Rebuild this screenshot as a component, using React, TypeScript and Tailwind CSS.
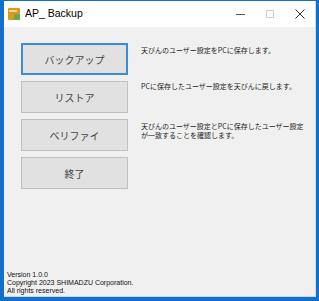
import React from "react";

const jp = { fontFamily: '"Noto Sans CJK JP", "Noto Sans", sans-serif' };
const lat = { fontFamily: '"Liberation Sans", "Noto Sans CJK JP", sans-serif' };

function Btn({ label, focused }: { label: string; focused?: boolean }) {
  return (
    <div
      className={
        "w-[107px] h-[32px] flex items-center justify-center bg-[#e1e1e1] text-[10px] text-[#444] " +
        (focused ? "border-2 border-[#3c8bd6]" : "border border-[#c0c0c0]")
      }
      style={jp}
    >
      {label}
    </div>
  );
}

export default function App() {
  return (
    <div className="w-[319px] h-[301px] bg-[#1270cc] pl-[4px] pr-[3px] pt-[1px] pb-[4px] overflow-hidden">
      <div className="w-full h-full flex flex-col bg-[#f0f0f0] border-r border-b border-[#c9d9ea]">
        <div className="h-[26px] bg-white flex items-center shrink-0">
          <div className="ml-[4px] w-[12px] h-[12px] relative">
            <div className="absolute inset-0 bg-[#d99a1e] rounded-[1px]" />
            <div className="absolute left-[1px] top-[2px] w-[8px] h-[2px] bg-[#f6d58a]" />
            <div className="absolute right-0 bottom-0 w-[6px] h-[6px] bg-[#6aa84f] rounded-[1px]" />
          </div>
          <span className="ml-[5px] text-[10.5px] text-black" style={lat}>AP_ Backup</span>
          <div className="flex-1" />
          <div className="w-[30px] flex justify-center">
            <div className="w-[9px] h-[1px] bg-[#555]" />
          </div>
          <div className="w-[30px] flex justify-center">
            <div className="w-[8px] h-[8px] border border-[#cfcfcf]" />
          </div>
          <div className="w-[30px] flex justify-center items-center">
            <svg width="10" height="10" viewBox="0 0 10 10">
              <path d="M0.5 0.5 L9.5 9.5 M9.5 0.5 L0.5 9.5" stroke="#333" strokeWidth="1" />
            </svg>
          </div>
        </div>
        <div className="flex-1 flex flex-col">
          <div className="flex mt-[16px] ml-[17px]">
            <div className="flex flex-col gap-[6px]">
              <Btn label="バックアップ" focused />
              <Btn label="リストア" />
              <Btn label="ベリファイ" />
              <Btn label="終了" />
            </div>
            <div
              className="flex flex-col ml-[13px] text-[7px] leading-[9px] text-[#222] whitespace-nowrap"
              style={jp}
            >
              <div className="h-[32px] pt-[3px]">天びんのユーザー設定をPCに保存します。</div>
              <div className="h-[32px] mt-[6px] pt-[1px]">PCに保存したユーザー設定を天びんに戻します。</div>
              <div className="h-[32px] mt-[6px] pt-[3px]">
                <div>天びんのユーザー設定とPCに保存したユーザー設定</div>
                <div>が一致することを確認します。</div>
              </div>
            </div>
          </div>
          <div className="flex-1" />
          <div className="ml-[3px] mb-[1px] text-[7px] leading-[8px] text-[#111]" style={lat}>
            <div>Version 1.0.0</div>
            <div>Copyright 2023 SHIMADZU Corporation.</div>
            <div>All rights reserved.</div>
          </div>
        </div>
      </div>
    </div>
  );
}
